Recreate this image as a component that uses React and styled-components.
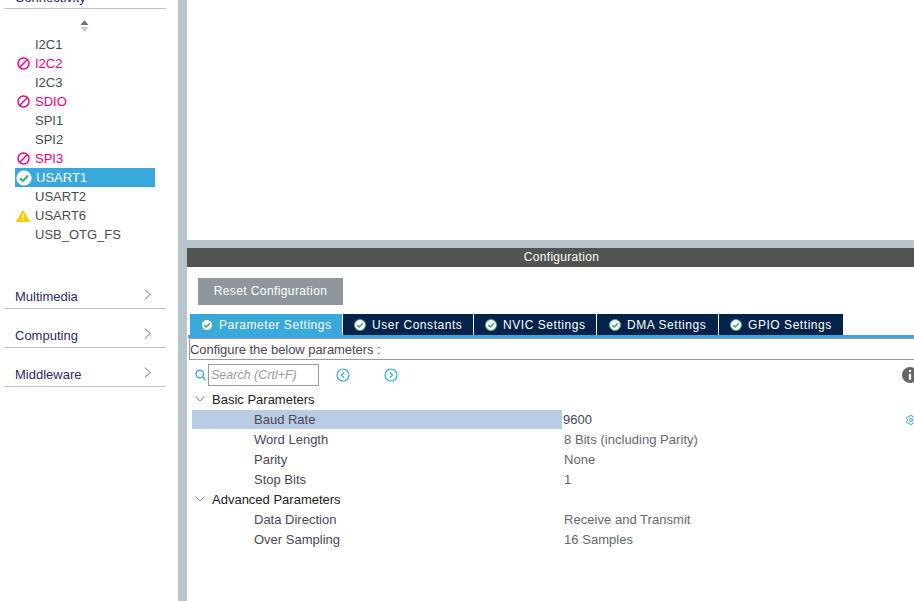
import React from "react";
import styled, { createGlobalStyle } from "styled-components";
import { Settings } from "lucide-react";

const GlobalStyle = createGlobalStyle`
    html, body { margin: 0; padding: 0; background: #fff; overflow: hidden; }
    body { font-family: "Liberation Sans", Arial, sans-serif; }
`;

const Page = styled.div`
    width: 914px;
    height: 601px;
    display: grid;
    grid-template-columns: 178px 9px 1fr;
    overflow: hidden;
`;
const Sidebar = styled.div`
    padding-left: 4px;
    width: 162px;
`;
const SectionHead = styled.div`
    height: ${(p) => p.$height}px;
    margin-top: ${(p) => p.$top || 0}px;
    border-bottom: 1px solid #b8c4cb;
    display: flex;
    align-items: flex-end;
    justify-content: space-between;
    padding: 0 15px 4px 11px;
    overflow: hidden;
    color: #2e2a66;
    font-size: 13px;
    line-height: 15px;
    svg { display: block; margin-bottom: 4px; }
`;
const CutHead = styled(SectionHead)`
    padding-bottom: 0;
`;
const CutText = styled.span`
    margin-bottom: 3px;
`;
const Sorter = styled.div`
    height: 26px;
    box-sizing: border-box;
    padding: 8px 2px 0 0;
    display: flex;
    align-items: center;
    justify-content: center;
`;
const List = styled.div`
    display: flex;
    flex-direction: column;
    margin-left: 11px;
    width: 140px;
`;
const Item = styled.div`
    height: 19px;
    line-height: 19px;
    font-size: 13px;
    display: flex;
    align-items: center;
    color: ${(p) => (p.$state === "blocked" ? "#e6007e" : p.$state === "ok" ? "#fff" : "#4a4a52")};
    background: ${(p) => (p.$state === "ok" ? "#39a9dc" : "transparent")};
`;
const ItemIcon = styled.span`
    width: ${(p) => (p.$state === "ok" ? 21 : 20)}px;
    box-sizing: border-box;
    padding-right: 4px;
    flex: none;
    display: flex;
    align-items: center;
    justify-content: center;
`;
const Splitter = styled.div`
    background: #b8c4cb;
`;
const Main = styled.div`
    display: flex;
    flex-direction: column;
    min-width: 0;
    overflow: hidden;
`;
const TopPane = styled.div`
    height: 240px;
    flex: none;
`;
const PaneGap = styled.div`
    height: 8px;
    flex: none;
    background: #b8c4cb;
`;
const ConfigBar = styled.div`
    height: 19px;
    flex: none;
    padding-left: 22px;
    background: #525452;
    color: #fff;
    font-size: 12px;
    line-height: 19px;
    text-align: center;
    letter-spacing: 0.3px;
`;
const ResetButton = styled.div`
    width: 145px;
    height: 27px;
    flex: none;
    margin: 11px 0 9px 11px;
    background: #8f969c;
    color: #fff;
    font-size: 12px;
    line-height: 27px;
    text-align: center;
    letter-spacing: 0.4px;
`;
const Tabs = styled.div`
    display: flex;
    flex: none;
    margin-left: 1px;
    padding-left: 2px;
    border-bottom: 3px solid #39a9dc;
    height: 21px;
`;
const Tab = styled.div`
    width: ${(p) => p.$width}px;
    margin-right: 1px;
    flex: none;
    display: flex;
    align-items: center;
    box-sizing: border-box;
    padding-left: ${(p) => p.$pad}px;
    gap: 6px;
    background: ${(p) => (p.$active ? "#39a9dc" : "#03234b")};
    color: #fff;
    font-size: 12px;
    letter-spacing: 0.55px;
    white-space: nowrap;
`;
const ConfigureBox = styled.div`
    height: 20px;
    flex: none;
    margin-left: 2px;
    border-top: 1px solid #9a9a9a;
    border-bottom: 1px solid #9a9a9a;
    border-left: 1px solid #9a9a9a;
    color: #4a4658;
    font-size: 13px;
    line-height: 22px;
    letter-spacing: -0.05px;
`;
const SearchRow = styled.div`
    height: 29px;
    flex: none;
    box-sizing: border-box;
    padding: 1px 0 0 8px;
    display: flex;
    align-items: center;
    position: relative;
`;
const SearchInput = styled.div`
    width: 111px;
    height: 22px;
    margin: 0 17px 0 2px;
    border: 1px solid #9a9a9a;
    box-sizing: border-box;
    color: #9a9a9a;
    font-size: 12.5px;
    font-style: italic;
    line-height: 20px;
    padding-left: 2px;
`;
const NavButton = styled.span`
    display: flex;
    margin-right: 34px;
`;
const InfoIcon = styled.span`
    margin-left: auto;
    margin-right: -4px;
    display: flex;
    flex: none;
`;
const Grid = styled.div`
    display: flex;
    flex-direction: column;
    margin-left: 5px;
    font-size: 13px;
`;
const Group = styled.div`
    height: 20px;
    display: flex;
    align-items: center;
    color: #222;
    svg { margin: 0 7px 0 3px; }
`;
const Row = styled.div`
    height: 20px;
    display: grid;
    grid-template-columns: 370px 1fr;
    align-items: center;
    color: #4a4658;
    position: relative;
`;
const Label = styled.div`
    height: 19px;
    align-self: end;
    line-height: 19px;
    padding-left: 62px;
    background: ${(p) => (p.$selected ? "#b8cde4" : "transparent")};
`;
const Value = styled.div`
    padding-left: ${(p) => (p.$selected ? 1 : 2)}px;
    color: ${(p) => (p.$selected ? "#4a4658" : "#66666e")};
    letter-spacing: 0.04px;
`;
const Gear = styled.span`
    position: absolute;
    right: -3px;
    top: 5px;
    display: flex;
    color: #39a9dc;
`;

const Blocked = () => (
    <svg width="13" height="13" viewBox="0 0 13 13" fill="none" stroke="#e6007e" strokeWidth="1.4">
        <circle cx="6.5" cy="6.5" r="5.5" />
        <path d="M2.8 10.2 10.2 2.8" />
    </svg>
);
const Warning = () => (
    <svg width="14" height="12" viewBox="0 0 14 12">
        <path d="M7 0.5 13.6 11.5H0.4Z" fill="#fc0" stroke="#fc0" strokeLinejoin="round" />
        <path d="M7 4v4M7 9v1.4" stroke="#fff" strokeWidth="1.3" />
    </svg>
);
const Check = ({ size = 12 }) => (
    <svg width={size} height={size} viewBox="0 0 16 16" style={{ flex: "none" }}>
        <circle cx="8" cy="8" r="7.6" fill="#fff" />
        <path d="M4 8.2 7 11l5-5.6" fill="none" stroke="#3cb371" strokeWidth="2.2" />
    </svg>
);
const TabCheck = () => (
    <svg width="12" height="12" viewBox="0 0 12 12" style={{ flex: "none" }}>
        <circle cx="6" cy="6" r="5.5" fill="#fff" stroke="#4fa67f" strokeWidth="1" />
        <path d="M3.2 6.1 5.3 8l3.5-3.8" fill="none" stroke="#3fa36f" strokeWidth="1.5" />
    </svg>
);
const Chevron = () => (
    <svg width="7" height="11" viewBox="0 0 7 11" fill="none" stroke="#77797c" strokeWidth="1">
        <path d="M.8.6 6.2 5.5.8 10.4" />
    </svg>
);
const ChevronDown = () => (
    <svg width="10" height="6" viewBox="0 0 10 6" fill="none" stroke="#8a8f94" strokeWidth="1">
        <path d="M.6.6 5 5l4.4-4.4" />
    </svg>
);
const Sort = () => (
    <svg width="9" height="12" viewBox="0 0 9 12">
        <path d="M4.5 0 8.5 5H.5Z" fill="#6f7478" />
        <path d="M4.5 12 8.5 7H.5Z" fill="#c4c8cb" />
    </svg>
);
const Nav = ({ dir }) => (
    <svg width="14" height="14" viewBox="0 0 14 14" fill="none" stroke="#39a9dc" strokeWidth="1.2">
        <circle cx="7" cy="7" r="6" />
        <path d={dir === "left" ? "M8 4.5 5.5 7 8 9.5" : "M6 4.5 8.5 7 6 9.5"} />
    </svg>
);
const Magnifier = () => (
    <svg width="11" height="12" viewBox="0 0 11 12" fill="none" stroke="#39a9dc" strokeWidth="1.4" style={{ flex: "none" }}>
        <circle cx="4.8" cy="5" r="3.8" />
        <path d="M7.6 8l3 3.4" />
    </svg>
);
const Info = () => (
    <svg width="16" height="16" viewBox="0 0 16 16">
        <circle cx="8" cy="8" r="8" fill="#666" />
        <path d="M8 3v2M8 6.8v6" stroke="#fff" strokeWidth="2.2" />
    </svg>
);

const items = [
    ["I2C1"],
    ["I2C2", "blocked"],
    ["I2C3"],
    ["SDIO", "blocked"],
    ["SPI1"],
    ["SPI2"],
    ["SPI3", "blocked"],
    ["USART1", "ok"],
    ["USART2"],
    ["USART6", "warn"],
    ["USB_OTG_FS"],
];
const tabs = [
    ["Parameter Settings", 152, 11, true],
    ["User Constants", 130, 11],
    ["NVIC Settings", 122, 11],
    ["DMA Settings", 121, 12],
    ["GPIO Settings", 124, 11],
];
const basic = [
    ["Baud Rate", "9600", true],
    ["Word Length", "8 Bits (including Parity)"],
    ["Parity", "None"],
    ["Stop Bits", "1"],
];
const advanced = [
    ["Data Direction", "Receive and Transmit"],
    ["Over Sampling", "16 Samples"],
];

const ParamRow = ({ label, value, selected }) => (
    <Row>
        <Label $selected={selected}>{label}</Label>
        <Value $selected={selected}>{value}</Value>
        {selected && <Gear><Settings size={12} strokeWidth={2} /></Gear>}
    </Row>
);

const App = () => {
    return (
        <Page>
            <GlobalStyle />
            <Sidebar>
                <CutHead $height={8}><CutText>Connectivity</CutText></CutHead>
                <Sorter><Sort /></Sorter>
                <List>
                    {items.map(([name, state]) => (
                        <Item key={name} $state={state}>
                            <ItemIcon $state={state}>
                                {state === "blocked" && <Blocked />}
                                {state === "ok" && <Check size={16} />}
                                {state === "warn" && <Warning />}
                            </ItemIcon>
                            {name}
                        </Item>
                    ))}
                </List>
                <SectionHead $height={20} $top={40}>Multimedia<Chevron /></SectionHead>
                <SectionHead $height={20} $top={14}>Computing<Chevron /></SectionHead>
                <SectionHead $height={20} $top={14}>Middleware<Chevron /></SectionHead>
            </Sidebar>
            <Splitter />
            <Main>
                <TopPane />
                <PaneGap />
                <ConfigBar>Configuration</ConfigBar>
                <ResetButton>Reset Configuration</ResetButton>
                <Tabs>
                    {tabs.map(([name, width, pad, active]) => (
                        <Tab key={name} $width={width} $pad={pad} $active={active}>
                            <TabCheck />
                            {name}
                        </Tab>
                    ))}
                </Tabs>
                <ConfigureBox>Configure the below parameters :</ConfigureBox>
                <SearchRow>
                    <Magnifier />
                    <SearchInput>Search (Crtl+F)</SearchInput>
                    <NavButton><Nav dir="left" /></NavButton>
                    <NavButton><Nav dir="right" /></NavButton>
                    <InfoIcon><Info /></InfoIcon>
                </SearchRow>
                <Grid>
                    <Group><ChevronDown />Basic Parameters</Group>
                    {basic.map(([l, v, s]) => <ParamRow key={l} label={l} value={v} selected={s} />)}
                    <Group><ChevronDown />Advanced Parameters</Group>
                    {advanced.map(([l, v]) => <ParamRow key={l} label={l} value={v} />)}
                </Grid>
            </Main>
        </Page>
    );
};

export default App;
